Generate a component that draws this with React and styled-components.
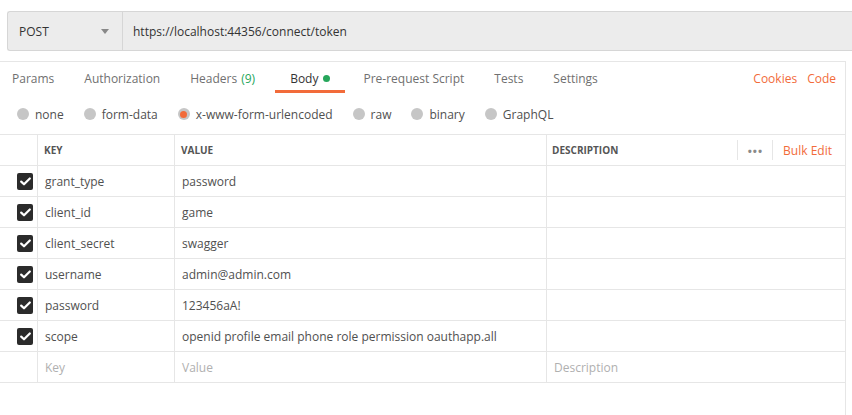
import React from 'react'
import styled, { createGlobalStyle } from 'styled-components'

const GlobalStyle = createGlobalStyle`
  html, body {
    margin: 0;
    padding: 0;
    background: #fff;
  }
  body {
    font-family: "Open Sans", "Noto Sans", sans-serif;
    color: #505050;
  }
`;

const ORANGE = '#f26b3a';
const LINE = '#e6e6e6';

const Page = styled.div`
  padding-top: 11px;
  width: 852px;
`;

const UrlBar = styled.div`
  display: flex;
  height: 40px;
  box-sizing: border-box;
  margin-left: 7px;
  background: #ececec;
  border: 1px solid #d6d6d6;
  border-right: none;
  border-radius: 3px 0 0 3px;
  font-size: 12px;
  color: #333;
`;

const Method = styled.div`
  width: 115px;
  box-sizing: border-box;
  display: flex;
  align-items: center;
  justify-content: space-between;
  padding: 0 13px 0 11px;
  border-right: 1px solid #d6d6d6;
`;

const Caret = styled.span`
  width: 0;
  height: 0;
  border-left: 4px solid transparent;
  border-right: 4px solid transparent;
  border-top: 5px solid #888;
`;

const Url = styled.div`
  display: flex;
  align-items: center;
  padding-left: 10px;
`;

const Content = styled.div`
  margin-top: 10px;
  width: 846px;
  height: 354px;
  box-sizing: border-box;
  border-top: 1px solid ${LINE};
  border-right: 1px solid ${LINE};
`;

const TabBar = styled.div`
  display: flex;
  align-items: center;
  justify-content: space-between;
  height: 31px;
  box-sizing: border-box;
  padding: 2px 9px 0 12px;
  font-size: 12px;
`;

const TabList = styled.div`
  display: flex;
  height: 100%;
  gap: 30px;
`;

const Tab = styled.div`
  position: relative;
  display: flex;
  align-items: center;
  margin: ${p => (p.$active ? '0 3px 0 5px' : '0')};
  color: ${p => (p.$active ? '#333' : '#707070')};
  &::after {
    content: '';
    display: ${p => (p.$active ? 'block' : 'none')};
    position: absolute;
    left: -15px;
    right: -15px;
    bottom: 0;
    height: 3px;
    background: ${ORANGE};
  }
`;

const Count = styled.span`
  color: #26a65b;
  margin-left: 4px;
`;

const Dot = styled.span`
  display: inline-block;
  width: 7px;
  height: 7px;
  border-radius: 50%;
  background: #26a65b;
  margin-left: 5px;
`;

const Links = styled.div`
  display: flex;
  gap: 10px;
  color: ${ORANGE};
`;

const RadioRow = styled.div`
  display: flex;
  align-items: center;
  height: 41px;
  box-sizing: border-box;
  padding: 1px 0 0 17px;
  gap: 20px;
  font-size: 12px;
  color: #505050;
`;

const RadioItem = styled.label`
  display: flex;
  align-items: center;
  gap: 6px;
`;

const Radio = styled.span`
  width: 12px;
  height: 12px;
  border-radius: 50%;
  background: #c6c6c6;
  display: flex;
  align-items: center;
  justify-content: center;
  &::after {
    content: '';
    display: ${p => (p.$checked ? 'block' : 'none')};
    width: 7px;
    height: 7px;
    border-radius: 50%;
    background: ${ORANGE};
  }
`;

const Table = styled.div`
  display: grid;
  grid-template-columns: 38px 137px 372px 1fr;
  border-top: 1px solid ${LINE};
`;

const Cell = styled.div`
  height: 31px;
  box-sizing: border-box;
  display: flex;
  align-items: center;
  padding-left: ${p => p.$pad ?? 7}px;
  border-bottom: 1px solid ${LINE};
  border-right: ${p => (p.$last ? 'none' : `1px solid ${LINE}`)};
  font-size: ${p => (p.$head ? '10px' : '12px')};
  font-weight: ${p => (p.$head ? 700 : 400)};
  color: ${p => (p.$head ? '#555' : p.$placeholder ? '#b0b0b0' : '#505050')};
  white-space: nowrap;
  overflow: hidden;
`;

const HeadDesc = styled(Cell)`
  padding-left: 5px;
  padding-right: 13px;
`;

const DescLabel = styled.span`
  flex: 1;
`;

const Divider = styled.span`
  width: 1px;
  height: 20px;
  background: ${LINE};
`;

const More = styled.span`
  color: #8a8a8a;
  font-size: 11px;
  letter-spacing: 1px;
  padding: 0 9px 0 10px;
  line-height: 1;
`;

const BulkEdit = styled.span`
  color: ${ORANGE};
  font-weight: 400;
  font-size: 12px;
  padding-left: 10px;
`;

const Check = styled.span`
  width: 16px;
  height: 17px;
  border-radius: 2px;
  background: #2b2b2b;
  display: flex;
  align-items: center;
  justify-content: center;
`;

function CheckBox() {
  return (
    <Check>
      <svg width="11" height="9" viewBox="0 0 11 9">
        <path d="M1.2 4.6 L4 7.3 L9.8 1.5" fill="none" stroke="#fff" strokeWidth="2.2" strokeLinecap="round" strokeLinejoin="round" />
      </svg>
    </Check>
  );
}

const rows = [
  ['grant_type', 'password'],
  ['client_id', 'game'],
  ['client_secret', 'swagger'],
  ['username', 'admin@admin.com'],
  ['password', '123456aA!'],
  ['scope', 'openid profile email phone role permission oauthapp.all'],
];

const bodyTypes = ['none', 'form-data', 'x-www-form-urlencoded', 'raw', 'binary', 'GraphQL'];

export default function App() {
  return (
    <Page>
      <GlobalStyle />
      <UrlBar>
        <Method>
          <span>POST</span>
          <Caret />
        </Method>
        <Url>https://localhost:44356/connect/token</Url>
      </UrlBar>

      <Content>
        <TabBar>
          <TabList>
            <Tab>Params</Tab>
            <Tab>Authorization</Tab>
            <Tab>Headers<Count>(9)</Count></Tab>
            <Tab $active>Body<Dot /></Tab>
            <Tab>Pre-request Script</Tab>
            <Tab>Tests</Tab>
            <Tab>Settings</Tab>
          </TabList>
          <Links>
            <span>Cookies</span>
            <span>Code</span>
          </Links>
        </TabBar>

        <RadioRow>
          {bodyTypes.map(t => (
            <RadioItem key={t}>
              <Radio $checked={t === 'x-www-form-urlencoded'} />
              {t}
            </RadioItem>
          ))}
        </RadioRow>

        <Table>
          <Cell />
          <Cell $head $pad={6}>KEY</Cell>
          <Cell $head $pad={6}>VALUE</Cell>
          <HeadDesc $head $last>
            <DescLabel>DESCRIPTION</DescLabel>
            <Divider />
            <More>•••</More>
            <Divider />
            <BulkEdit>Bulk Edit</BulkEdit>
          </HeadDesc>

          {rows.map(([k, v]) => (
            <React.Fragment key={k}>
              <Cell $pad={17}><CheckBox /></Cell>
              <Cell>{k}</Cell>
              <Cell>{v}</Cell>
              <Cell $last />
            </React.Fragment>
          ))}

          <Cell />
          <Cell $placeholder>Key</Cell>
          <Cell $placeholder>Value</Cell>
          <Cell $placeholder $last>Description</Cell>
        </Table>
      </Content>
    </Page>
  );
}
